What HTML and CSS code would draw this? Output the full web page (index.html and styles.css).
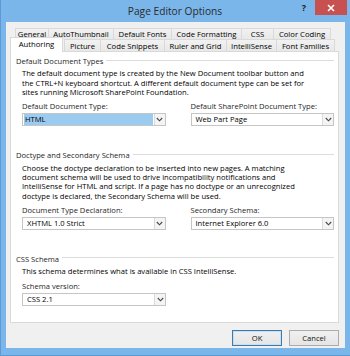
FILE: index.html
```html
<!DOCTYPE html>
<html lang="en">

<head>
    <meta charset="UTF-8">
    <meta name="viewport" content="width=device-width, initial-scale=1.0">
    <title>Page Editor Options</title>
    <link rel="stylesheet" href="styles.css">
</head>

<body>
    <div class="windowFrame">
        <div class="titleBar">
            <div></div>
            <p class="titleText">Page Editor Options</p>
            <div class="titleControls">
                <span class="helpMark">?</span>
                <span class="closeButton">
                    <svg width="8" height="8" viewBox="0 0 8 8"><path d="M1 1 L7 7 M7 1 L1 7" stroke="#fff" stroke-width="1.6"/></svg>
                </span>
            </div>
        </div>

        <div class="dialogBody">
            <div class="tabRow rowOne">
                <span class="tab" style="width: 34px">General</span>
                <span class="tab" style="width: 66px">AutoThumbnail</span>
                <span class="tab" style="width: 59px">Default Fonts</span>
                <span class="tab" style="width: 71px">Code Formatting</span>
                <span class="tab" style="width: 33px">CSS</span>
                <span class="tab" style="width: 58px">Color Coding</span>
            </div>
            <div class="tabRow rowTwo">
                <span class="tab activeTab" style="width: 51px">Authoring</span>
                <span class="tab" style="width: 37px">Picture</span>
                <span class="tab" style="width: 65px">Code Snippets</span>
                <span class="tab" style="width: 63px">Ruler and Grid</span>
                <span class="tab" style="width: 51px">IntelliSense</span>
                <span class="tab" style="width: 59px">Font Families</span>
            </div>

            <div class="tabPanel">
                <div class="groupHead"><span>Default Document Types</span></div>
                <p class="groupText">The default document type is created by the New Document toolbar button and<br>the CTRL+N keyboard shortcut. A different default document type can be set for<br>sites running Microsoft SharePoint Foundation.</p>
                <div class="fieldRow">
                    <div class="field">
                        <p class="fieldLabel">Default Document Type:</p>
                        <div class="comboBox">
                            <span class="comboValue selectedValue">HTML</span>
                            <span class="comboArrow"><svg width="7" height="5" viewBox="0 0 7 5"><path d="M0.8 1 L3.5 3.8 L6.2 1" fill="none" stroke="#444" stroke-width="1.1"/></svg></span>
                        </div>
                    </div>
                    <div class="field">
                        <p class="fieldLabel">Default SharePoint Document Type:</p>
                        <div class="comboBox">
                            <span class="comboValue">Web Part Page</span>
                            <span class="comboArrow"><svg width="7" height="5" viewBox="0 0 7 5"><path d="M0.8 1 L3.5 3.8 L6.2 1" fill="none" stroke="#444" stroke-width="1.1"/></svg></span>
                        </div>
                    </div>
                </div>

                <div class="groupHead spacedHead"><span>Doctype and Secondary Schema</span></div>
                <p class="groupText">Choose the doctype declaration to be inserted into new pages. A matching<br>document schema will be used to drive incompatibility notifications and<br>IntelliSense for HTML and script. If a page has no doctype or an unrecognized<br>doctype is declared, the Secondary Schema will be used.</p>
                <div class="fieldRow">
                    <div class="field">
                        <p class="fieldLabel">Document Type Declaration:</p>
                        <div class="comboBox">
                            <span class="comboValue">XHTML 1.0 Strict</span>
                            <span class="comboArrow"><svg width="7" height="5" viewBox="0 0 7 5"><path d="M0.8 1 L3.5 3.8 L6.2 1" fill="none" stroke="#444" stroke-width="1.1"/></svg></span>
                        </div>
                    </div>
                    <div class="field">
                        <p class="fieldLabel">Secondary Schema:</p>
                        <div class="comboBox">
                            <span class="comboValue">Internet Explorer 6.0</span>
                            <span class="comboArrow"><svg width="7" height="5" viewBox="0 0 7 5"><path d="M0.8 1 L3.5 3.8 L6.2 1" fill="none" stroke="#444" stroke-width="1.1"/></svg></span>
                        </div>
                    </div>
                </div>

                <div class="groupHead spacedHead"><span>CSS Schema</span></div>
                <p class="groupText">This schema determines what is available in CSS IntelliSense.</p>
                <div class="fieldRow">
                    <div class="field">
                        <p class="fieldLabel">Schema version:</p>
                        <div class="comboBox">
                            <span class="comboValue">CSS 2.1</span>
                            <span class="comboArrow"><svg width="7" height="5" viewBox="0 0 7 5"><path d="M0.8 1 L3.5 3.8 L6.2 1" fill="none" stroke="#444" stroke-width="1.1"/></svg></span>
                        </div>
                    </div>
                </div>
            </div>

            <div class="buttonRow">
                <button class="dialogButton defaultButton">OK</button>
                <button class="dialogButton">Cancel</button>
            </div>
        </div>
    </div>
</body>

</html>
```
FILE: styles.css
```css
* {
    margin: 0;
    padding: 0;
    box-sizing: border-box;
}

body {
    width: 350px;
    height: 356px;
    overflow: hidden;
    background-color: #7ab6ea;
    font-family: "Open Sans", "Noto Sans", sans-serif;
    color: #000;
}

.windowFrame {
    width: 350px;
    height: 356px;
    border-left: 1px solid #5b9ad6;
    border-bottom: 1px solid #5b9ad6;
    display: flex;
    flex-direction: column;
}

.titleBar {
    height: 22px;
    display: grid;
    grid-template-columns: 1fr auto 1fr;
    align-items: start;
}

.titleText {
    font-size: 10.2px;
    line-height: 22px;
    color: #2b2b2b;
    margin-left: -1px;
}

.titleControls {
    display: flex;
    justify-content: flex-end;
    align-items: flex-start;
    padding-right: 3px;
}

.helpMark {
    font-size: 9px;
    font-weight: bold;
    line-height: 14px;
    color: #222;
    margin-right: 9px;
    margin-top: 1px;
}

.closeButton {
    width: 32px;
    height: 15px;
    background-color: #c75050;
    display: flex;
    align-items: center;
    justify-content: center;
}

.dialogBody {
    margin: 0 5px 0 5px;
    height: 326px;
    background-color: #f0f0f0;
    padding: 6px 6px 0 4px;
}

.tabRow {
    display: flex;
    font-size: 7.7px;
}

.tab {
    display: flex;
    align-items: center;
    justify-content: center;
    white-space: nowrap;
    border: 1px solid #d9d9d9;
    border-bottom: none;
    background: linear-gradient(#f2f2f2, #e8e8e8);
    margin-right: -1px;
    color: #000;
}

.rowOne {
    height: 11px;
    padding-left: 5px;
}

.rowTwo {
    height: 12px;
    padding-left: 2px;
    position: relative;
    z-index: 1;
}

.activeTab {
    background: #fff;
    height: 15px;
    margin-top: -2px;
    margin-left: -2px;
    margin-right: 1px;
    width: 53px !important;
    padding-bottom: 2px;
}

.tabPanel {
    height: 272px;
    background-color: #fff;
    border: 1px solid #d9d9d9;
    padding: 4px 4px 0 5px;
    font-size: 7.6px;
}

.groupHead {
    display: flex;
    align-items: center;
    height: 10px;
    line-height: 10px;
    color: #1e1e1e;
}

.groupHead::after {
    content: "";
    flex: 1;
    height: 2px;
    margin-left: 3px;
    margin-top: 1px;
    border-top: 1px solid #dcdcdc;
    border-bottom: 1px solid #fff;
}

.spacedHead {
    margin-top: 24px;
}

.groupText {
    margin-top: 3.4px;
    margin-left: 6px;
    line-height: 9.3px;
    white-space: nowrap;
}

.fieldRow {
    display: flex;
    margin-left: 6px;
    margin-top: 4px;
    gap: 25px;
}

.field {
    width: 144px;
}

.fieldLabel {
    line-height: 10px;
    margin-bottom: 2px;
    color: #1e1e1e;
}

.comboBox {
    height: 13px;
    border: 1px solid #c5c5c5;
    display: flex;
    background-color: #fff;
}

.comboValue {
    flex: 1;
    line-height: 11px;
    padding-left: 3px;
    margin: 0 1px 0 1px;
}

.selectedValue {
    background-color: #9ccbf0;
    padding-left: 1px;
}

.comboArrow {
    width: 11px;
    border-left: 1px solid #dadada;
    background-color: #f4f4f4;
    display: flex;
    align-items: center;
    justify-content: center;
}

.buttonRow {
    display: flex;
    justify-content: flex-end;
    gap: 7px;
    margin-top: 7px;
    padding-right: 0;
}

.dialogButton {
    width: 50px;
    height: 16px;
    font-family: "Open Sans", "Noto Sans", sans-serif;
    font-size: 7.6px;
    color: #111;
    background: linear-gradient(#f0f0f0, #e5e5e5);
    border: 1px solid #acacac;
}

.defaultButton {
    border: 1px solid #3d7bad;
    box-shadow: inset 0 0 0 1px #c8dff2;
}
```
